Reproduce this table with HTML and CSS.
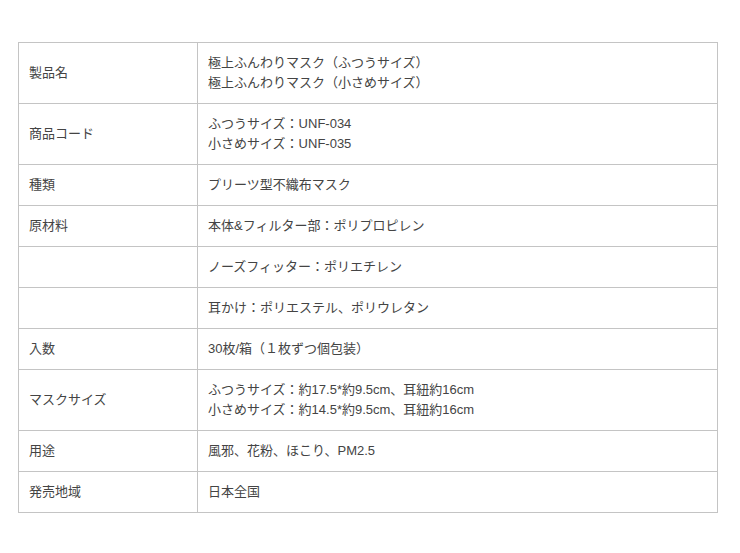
FILE: index.html
```html
<!DOCTYPE html>
<html lang="ja">
<head>
<meta charset="utf-8">
<link rel="stylesheet" href="styles.css">
</head>
<body>
<div class="page">
<table class="spec">
<tr><th>製品名</th><td>極上ふんわりマスク（ふつうサイズ）<br>極上ふんわりマスク（小さめサイズ）</td></tr>
<tr><th>商品コード</th><td>ふつうサイズ：UNF-034<br>小さめサイズ：UNF-035</td></tr>
<tr><th>種類</th><td>プリーツ型不織布マスク</td></tr>
<tr><th>原材料</th><td>本体&amp;フィルター部：ポリプロピレン</td></tr>
<tr><th></th><td>ノーズフィッター：ポリエチレン</td></tr>
<tr><th></th><td>耳かけ：ポリエステル、ポリウレタン</td></tr>
<tr><th>入数</th><td>30枚/箱（１枚ずつ個包装）</td></tr>
<tr><th>マスクサイズ</th><td>ふつうサイズ：約17.5*約9.5cm、耳紐約16cm<br>小さめサイズ：約14.5*約9.5cm、耳紐約16cm</td></tr>
<tr><th>用途</th><td>風邪、花粉、ほこり、PM2.5</td></tr>
<tr><th>発売地域</th><td>日本全国</td></tr>
</table>
</div>
</body>
</html>
```

FILE: styles.css
```css
html, body {
  margin: 0;
  padding: 0;
  background: #ffffff;
}
.page {
  padding: 42px 0 0 18px;
}
.spec {
  border-collapse: collapse;
  width: 700px;
  font-family: "Liberation Sans", "Noto Sans CJK JP", sans-serif;
  font-size: 13px;
  line-height: 20px;
  color: #444444;
}
.spec th,
.spec td {
  border: 1px solid #c4c4c4;
  padding: 10px 10px;
  text-align: left;
  vertical-align: middle;
  font-weight: normal;
}
.spec th {
  width: 158px;
}
```
